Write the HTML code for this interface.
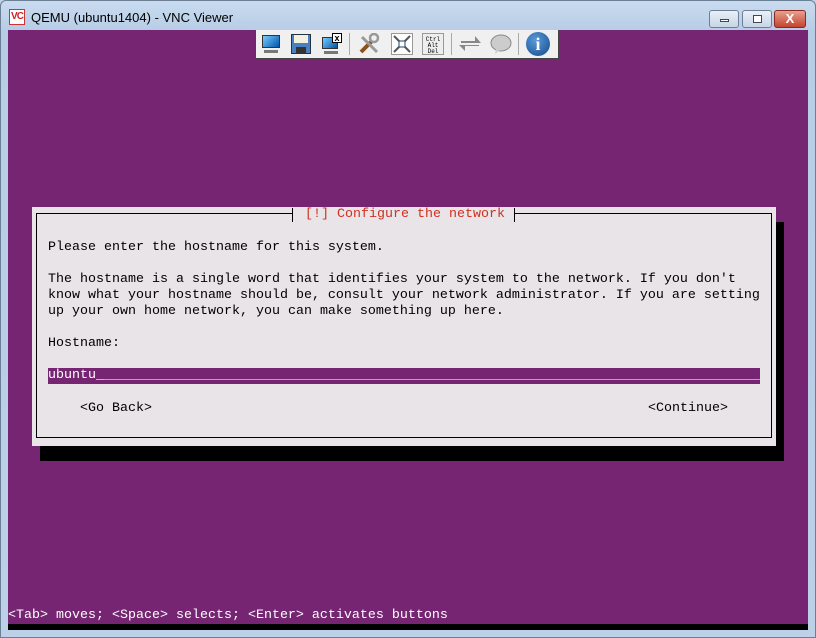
<!DOCTYPE html>
<html><head><meta charset="utf-8"><style>
*{margin:0;padding:0;box-sizing:border-box}
body{width:816px;height:638px;overflow:hidden;background:#bfd3ea;position:relative;font-family:"Liberation Mono",monospace}
.frame{position:absolute;left:0;top:0;width:816px;height:638px;background:linear-gradient(#c9dbef,#b7cde6 30px,#bcd1e8);border:1px solid #6d7f94;border-radius:6px 6px 0 0}
.title{position:absolute;left:31px;top:10px;font:13px "Liberation Sans",sans-serif;color:#000}
.logo{position:absolute;left:9px;top:9px;width:16px;height:16px;background:#fff;border:1px solid #c33;font:bold 10px "Liberation Sans",sans-serif;color:#c22;line-height:14px;text-align:center;letter-spacing:-1px}
.btn{position:absolute;top:10px;height:18px;border:1px solid #6e7f95;border-radius:3px;background:linear-gradient(#e9f0f8,#c7d5e6)}
.scr{position:absolute;left:8px;top:30px;width:800px;height:600px;background:#762572;overflow:hidden}
.tb{position:absolute;left:247px;top:0;width:304px;height:29px;background:#f0f0f0;border:1px solid #444;border-top:none}
.ic{position:absolute;top:3px;width:22px;height:22px}
.sep{position:absolute;top:3px;width:1px;height:22px;background:#aaa}
.shadow{position:absolute;left:32px;top:192px;width:744px;height:239px;background:#000}
.box{position:absolute;left:24px;top:177px;width:744px;height:239px;background:#e8e4e8}
.inner{position:absolute;left:4px;top:6px;width:736px;height:225px;border:1px solid #000}
.t{position:absolute;font-size:13.33px;line-height:16px;color:#000;white-space:pre}
.ttl{position:absolute;left:255px;top:-6px;background:#e8e4e8;padding:0 9px 0 12px;color:#d03020;border-left:1px solid #000;border-right:1px solid #000;height:14px;line-height:14px}
.field{position:absolute;left:16px;top:161px;width:712px;height:16px;background:#762572;color:#fff;overflow:hidden}
</style></head><body>
<div class="frame"></div>
<div class="logo">VC</div>
<div class="title">QEMU (ubuntu1404) - VNC Viewer</div>
<div class="btn" style="left:709px;width:30px"><div style="position:absolute;left:10px;top:8px;width:9px;height:3px;background:#fff;border:1px solid #445"></div></div>
<div class="btn" style="left:742px;width:30px"><div style="position:absolute;left:10px;top:4px;width:9px;height:8px;border:1px solid #445;background:#fff"></div></div>
<div class="btn" style="left:774px;width:32px;background:linear-gradient(#e8a090,#c4442e);border-color:#8a2a1e;color:#fff;font:bold 13px 'Liberation Sans',sans-serif;text-align:center;line-height:16px">X</div>
<div class="scr">
 <div class="tb">
  <div class="ic" style="left:4px"><div style="position:absolute;left:2px;top:2px;width:18px;height:13px;background:linear-gradient(135deg,#7cf,#05a);border:1px solid #333"></div><div style="position:absolute;left:4px;top:17px;width:14px;height:3px;background:#777"></div></div>
  <div class="ic" style="left:34px"><div style="position:absolute;left:1px;top:1px;width:20px;height:20px;background:#4a7fc0;border:1px solid #234"></div><div style="position:absolute;left:4px;top:2px;width:14px;height:8px;background:#f4f0e0"></div><div style="position:absolute;left:6px;top:14px;width:10px;height:7px;background:#333"></div></div>
  <div class="ic" style="left:64px"><div style="position:absolute;left:2px;top:4px;width:16px;height:12px;background:linear-gradient(135deg,#7cf,#05a);border:1px solid #333"></div><div style="position:absolute;left:12px;top:0;width:10px;height:10px;background:#fff;border:1px solid #000;font:bold 9px sans-serif;line-height:8px;text-align:center">x</div><div style="position:absolute;left:4px;top:18px;width:14px;height:3px;background:#777"></div></div>
  <div class="sep" style="left:93px"></div>
  <div class="ic" style="left:102px"><svg width="22" height="22"><path d="M3 19 L14 8" stroke="#8a5020" stroke-width="4"/><path d="M4 4 L19 19" stroke="#999" stroke-width="3"/><circle cx="16" cy="5" r="4" fill="none" stroke="#999" stroke-width="2.5"/></svg></div>
  <div class="ic" style="left:135px;border:1px solid #999;background:#fff"><svg width="20" height="20"><path d="M2 2l5 5M18 2l-5 5M2 18l5-5M18 18l-5-5" stroke="#555" stroke-width="2"/><rect x="7" y="7" width="6" height="6" fill="none" stroke="#246"/></svg></div>
  <div class="ic" style="left:166px;border:1px solid #999;background:#eee;font-size:6px;line-height:6px;text-align:center;padding-top:3px">Ctrl<br>Alt<br>Del</div>
  <div class="sep" style="left:195px"></div>
  <div class="ic" style="left:203px"><svg width="22" height="22"><path d="M2 8h14v-5l6 7h-20zM20 13h-14v5l-6-6h20z" fill="#888"/></svg></div>
  <div class="ic" style="left:234px"><svg width="22" height="22"><ellipse cx="11" cy="10" rx="10" ry="8" fill="#ccc" stroke="#888"/><path d="M6 16l-1 5 5-4" fill="#ccc"/></svg></div>
  <div class="sep" style="left:262px"></div>
  <div class="ic" style="left:270px;width:24px;height:24px;top:2px;border-radius:50%;background:radial-gradient(circle at 40% 35%,#5a9ad8,#134a8a);color:#fff;font:bold 18px 'Liberation Serif',serif;text-align:center;line-height:24px">i</div>
 </div>
 <div class="shadow"></div>
 <div class="box">
  <div class="inner">
   <div class="t ttl">[!] Configure the network</div>
  </div>
  <div class="t" style="left:16px;top:33px">Please enter the hostname for this system.</div>
  <div class="t" style="left:16px;top:65px">The hostname is a single word that identifies your system to the network. If you don't
know what your hostname should be, consult your network administrator. If you are setting
up your own home network, you can make something up here.</div>
  <div class="t" style="left:16px;top:129px">Hostname:</div>
  <div class="t field">ubuntu_<span style="color:#e8e4e8">__________________________________________________________________________________</span></div>
  <div class="t" style="left:48px;top:194px">&lt;Go Back&gt;</div>
  <div class="t" style="left:616px;top:194px">&lt;Continue&gt;</div>
 </div>
 <div class="t" style="left:0;top:578px;color:#fff">&lt;Tab&gt; moves; &lt;Space&gt; selects; &lt;Enter&gt; activates buttons</div>
 <div style="position:absolute;left:0;top:594px;width:800px;height:6px;background:#000"></div>
</div>
</body></html>
